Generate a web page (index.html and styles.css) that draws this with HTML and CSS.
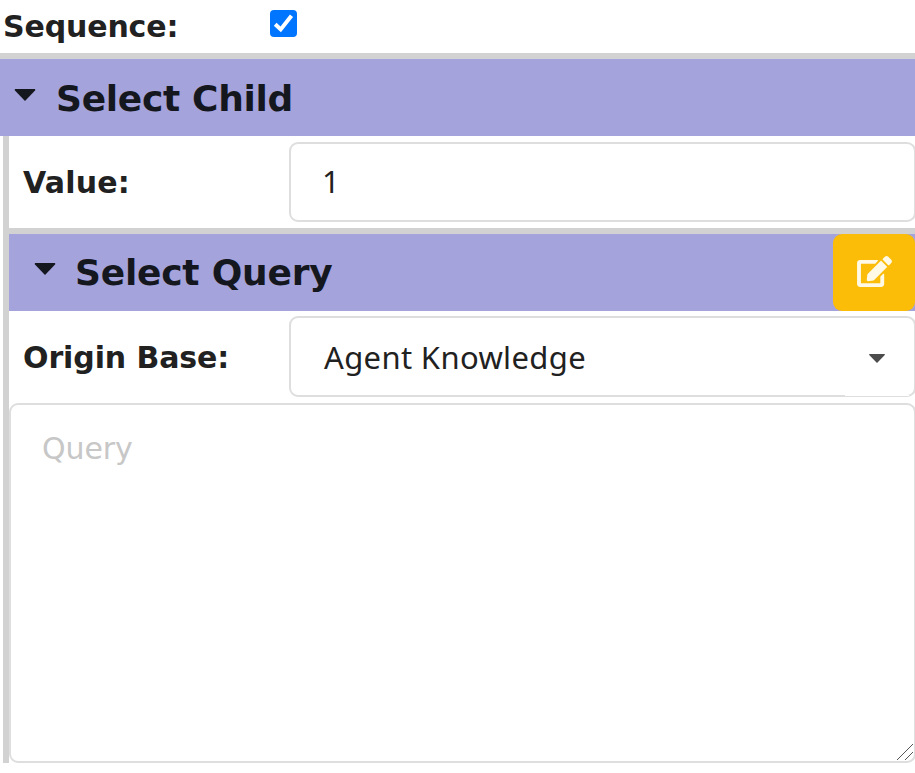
FILE: index.html
```html
<!DOCTYPE html>
<html lang="en">
<head>
<meta charset="utf-8">
<title>Select Child</title>
<link rel="stylesheet" href="styles.css">
</head>
<body>
<main class="panel">
  <div class="sequence">
    <span class="label label-sequence">Sequence:</span>
    <span class="checkbox" role="checkbox" aria-checked="true" aria-label="Sequence">
      <svg viewBox="0 0 27 27" width="27" height="27"><path d="M5.200 14.200 10.700 19.400 21.500 5.800" fill="none" stroke="#fff" stroke-width="4"/></svg>
    </span>
  </div>
  <section class="group">
    <header class="title">
      <svg class="arrow" viewBox="0 0 22 12" width="22" height="12"><path d="M1 0H21L21.300 1.200 11 12 .7 1.200Z" fill="#15171e"/></svg>
      <h2 class="heading heading-child">Select Child</h2>
    </header>
    <div class="content">
      <div class="row">
        <span class="label label-value">Value:</span>
        <div class="field"><span class="number">1</span></div>
      </div>
      <section class="group">
        <header class="title">
          <svg class="arrow" viewBox="0 0 22 12" width="22" height="12"><path d="M1 0H21L21.300 1.200 11 12 .7 1.200Z" fill="#15171e"/></svg>
          <h2 class="heading heading-query">Select Query</h2>
          <button class="edit" aria-label="Edit">
            <svg viewBox="0 0 576 512" width="35" height="31"><path fill="#fff9e6" d="M402.600 83.200l90.200 90.200c3.800 3.800 3.800 10 0 13.800L274.400 405.600l-92.800 10.300c-12.400 1.400-22.900-9.100-21.500-21.500l10.300-92.800L388.800 83.200c3.800-3.800 10-3.800 13.800 0zm162-22.900l-48.800-48.800c-15.200-15.200-39.900-15.200-55.200 0l-35.400 35.400c-3.800 3.800-3.800 10 0 13.800l90.200 90.200c3.800 3.800 10 3.800 13.800 0l35.400-35.400c15.200-15.300 15.200-40 0-55.200zM384 346.200V448H64V128h229.800c3.200 0 6.200-1.300 8.500-3.500l40-40c7.600-7.600 2.200-20.500-8.500-20.500H48C21.500 64 0 85.500 0 112v352c0 26.500 21.500 48 48 48h352c26.500 0 48-21.500 48-48V306.200c0-10.700-12.900-16-20.500-8.500l-40 40c-2.200 2.300-3.500 5.300-3.500 8.500z"/></svg>
          </button>
        </header>
        <div class="row row-select">
          <span class="label label-origin">Origin Base:</span>
          <div class="field select">
            <span class="selected">Agent Knowledge</span>
            <svg class="caret" viewBox="0 0 16 9" width="16" height="9"><path d="M.5 0H15.500L16 .7 8 9 0 .7Z" fill="#4c4c4c"/></svg>
          </div>
        </div>
        <div class="query">
          <span class="placeholder">Query</span>
          <svg class="grip" viewBox="0 0 16 16" width="16" height="16" shape-rendering="crispEdges"><path d="M0 16 16 0M8 16 16 8" stroke="#555" fill="none"/></svg>
        </div>
      </section>
    </div>
  </section>
</main>
</body>
</html>
```

FILE: styles.css
```css
* { box-sizing: border-box; }
body {
  margin: 0;
  background: #fff;
  color: #212121;
  font-family: "DejaVu Sans", Verdana, sans-serif;
  overflow: hidden;
}
svg { display: block; flex: none; }
.panel { width: 915px; }
.sequence { display: flex; height: 53px; padding-left: 4px; }
.label { font-size: 30px; font-weight: bold; line-height: 36px; white-space: nowrap; }
.label-sequence { width: 266px; margin-left: -1px; margin-right: 1px; padding-top: 9px; letter-spacing: -0.15px; }
.label-value { letter-spacing: 0.2px; }
.label-origin { letter-spacing: -0.1px; }
.checkbox { width: 27px; height: 27px; margin-top: 10px; border-radius: 4px; background: #0075ff; }
.group { border-top: 6px solid #d2d2d2; }
.title { display: flex; height: 77px; background: #a4a3dc; color: #15171e; }
.arrow { margin: 30px 0 0 14px; }
.heading { margin: 17px 0 0 20px; font-size: 36px; line-height: 44px; letter-spacing: -0.3px; white-space: nowrap; }
.heading-child { margin-top: 18px; }
.content .arrow { margin: 29px 0 0 25px; }
.content .heading { margin-left: 19px; letter-spacing: -0.22px; }
.content { margin-left: 3px; border-left: 6px solid #d2d2d2; }
.row { display: flex; height: 92px; padding: 6px 0 6px 14px; align-items: center; }
.row .label { width: 266px; padding-top: 2px; }
.field {
  display: flex;
  flex: 1;
  height: 80px;
  margin-right: -1px;
  align-items: center;
  padding: 0 29px 0 32px;
  border: 2px solid #dededf;
  border-radius: 9px;
  font: 31px/40px "Noto Sans", sans-serif;
}
.number { margin: -3px 0 0 -1px; }
.row-select { padding-top: 5px; }
.select { position: relative; height: 81px; justify-content: space-between; }
.select::after {
  content: "";
  position: absolute;
  right: 5px;
  bottom: -1px;
  width: 64px;
  height: 1px;
  background: #fff;
}
.selected { margin-left: 1px; letter-spacing: 0.35px; }
.caret { margin-top: 3px; }
.edit {
  display: flex;
  width: 82px;
  height: 77px;
  margin-left: auto;
  padding: 0 0 2px;
  align-items: center;
  justify-content: center;
  border: 0;
  border-radius: 9px;
  background: #fbbd08;
}
.query {
  display: flex;
  justify-content: space-between;
  height: 360px;
  margin-right: -1px;
  padding: 25px 1px 1px 31px;
  border: 2px solid #dededf;
  border-radius: 9px;
}
.placeholder { color: #c7c7c7; font-size: 30px; line-height: 37px; letter-spacing: -0.1px; }
.grip { align-self: flex-end; }
```
